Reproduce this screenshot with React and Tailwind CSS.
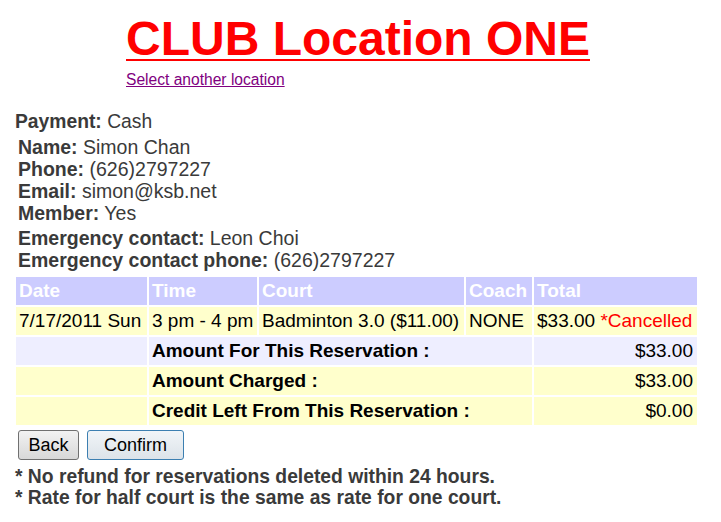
export default function App() {

  const info = [
    ["Name:", "Simon Chan"],
    ["Phone:", "(626)2797227"],
    ["Email:", "simon@ksb.net"],
    ["Member:", "Yes"],
  ];

  return (

    <div className="min-h-[522px] bg-white font-['Liberation_Sans',Arial,sans-serif] text-[#3a3a3a]">

      <div className="ml-[126px] pt-[15px]">
        <h1 className="inline-block text-[48px] font-bold leading-[48px] text-[#ff0000] underline decoration-[1.5px] underline-offset-[4px]">
          CLUB Location ONE
        </h1>
        <div className="mt-[8px] text-[15.6px] leading-[18px]">
          <a href="#" className="text-[#800080] underline">Select another location</a>
        </div>
      </div>

      <div className="mt-[22px] ml-[15px] text-[19.3px] leading-[22px]">
        <b>Payment:</b> Cash
      </div>

      <div className="mt-[3px] ml-[18px] text-[19.5px] leading-[22px]">
        {info.map(([k, v]) => (
          <div key={k}><b>{k}</b> {v}</div>
        ))}
        <div className="mt-[3px]"><b>Emergency contact:</b> Leon Choi</div>
        <div><b>Emergency contact phone:</b> (626)2797227</div>
      </div>

      <table className="mt-[4px] ml-[14px] w-[685px] table-fixed border-separate border-spacing-[2px] text-[19px] leading-[22px] text-black">
        <colgroup>
          <col className="w-[131px]" />
          <col className="w-[108px]" />
          <col className="w-[205px]" />
          <col className="w-[66px]" />
          <col className="w-[163px]" />
        </colgroup>
        <thead>
          <tr className="h-[28px] bg-[#ccccff] text-left font-bold text-white">
            <th className="px-[3px]">Date</th>
            <th className="px-[3px]">Time</th>
            <th className="px-[3px]">Court</th>
            <th className="px-[3px]">Coach</th>
            <th className="px-[3px]">Total</th>
          </tr>
        </thead>
        <tbody>
          <tr className="h-[28px] bg-[#ffffcc] whitespace-nowrap">
            <td className="px-[3px]">7/17/2011 Sun</td>
            <td className="px-[3px]">3 pm - 4 pm</td>
            <td className="px-[3px]">Badminton 3.0 ($11.00)</td>
            <td className="px-[3px]">NONE</td>
            <td className="px-[3px]">$33.00 <span className="text-[#ff0000]">*Cancelled</span></td>
          </tr>
          <tr className="h-[28px] bg-[#eeeeff]">
            <td></td>
            <td colSpan={3} className="px-[3px] font-bold">Amount For This Reservation :</td>
            <td className="px-[4px] text-right">$33.00</td>
          </tr>
          <tr className="h-[28px] bg-[#ffffcc]">
            <td></td>
            <td colSpan={3} className="px-[3px] font-bold">Amount Charged :</td>
            <td className="px-[4px] text-right">$33.00</td>
          </tr>
          <tr className="h-[28px] bg-[#ffffcc]">
            <td></td>
            <td colSpan={3} className="px-[3px] font-bold">Credit Left From This Reservation :</td>
            <td className="px-[4px] text-right">$0.00</td>
          </tr>
        </tbody>
      </table>

      <div className="mt-[3px] ml-[18px] flex gap-[8px] text-[18px] text-black">
        <button className="h-[30px] w-[61px] rounded-[3px] border border-[#707070] bg-gradient-to-b from-[#f2f2f2] to-[#d8d8d8]">
          Back
        </button>
        <button className="h-[30px] w-[97px] rounded-[3px] border border-[#3c7fb1] bg-gradient-to-b from-[#f1f5f8] to-[#dce3e9]">
          Confirm
        </button>
      </div>

      <div className="mt-[6px] ml-[15px] text-[19.3px] font-bold leading-[21px]">
        <div>* No refund for reservations deleted within 24 hours.</div>
        <div>* Rate for half court is the same as rate for one court.</div>
      </div>

    </div>

  );
}
